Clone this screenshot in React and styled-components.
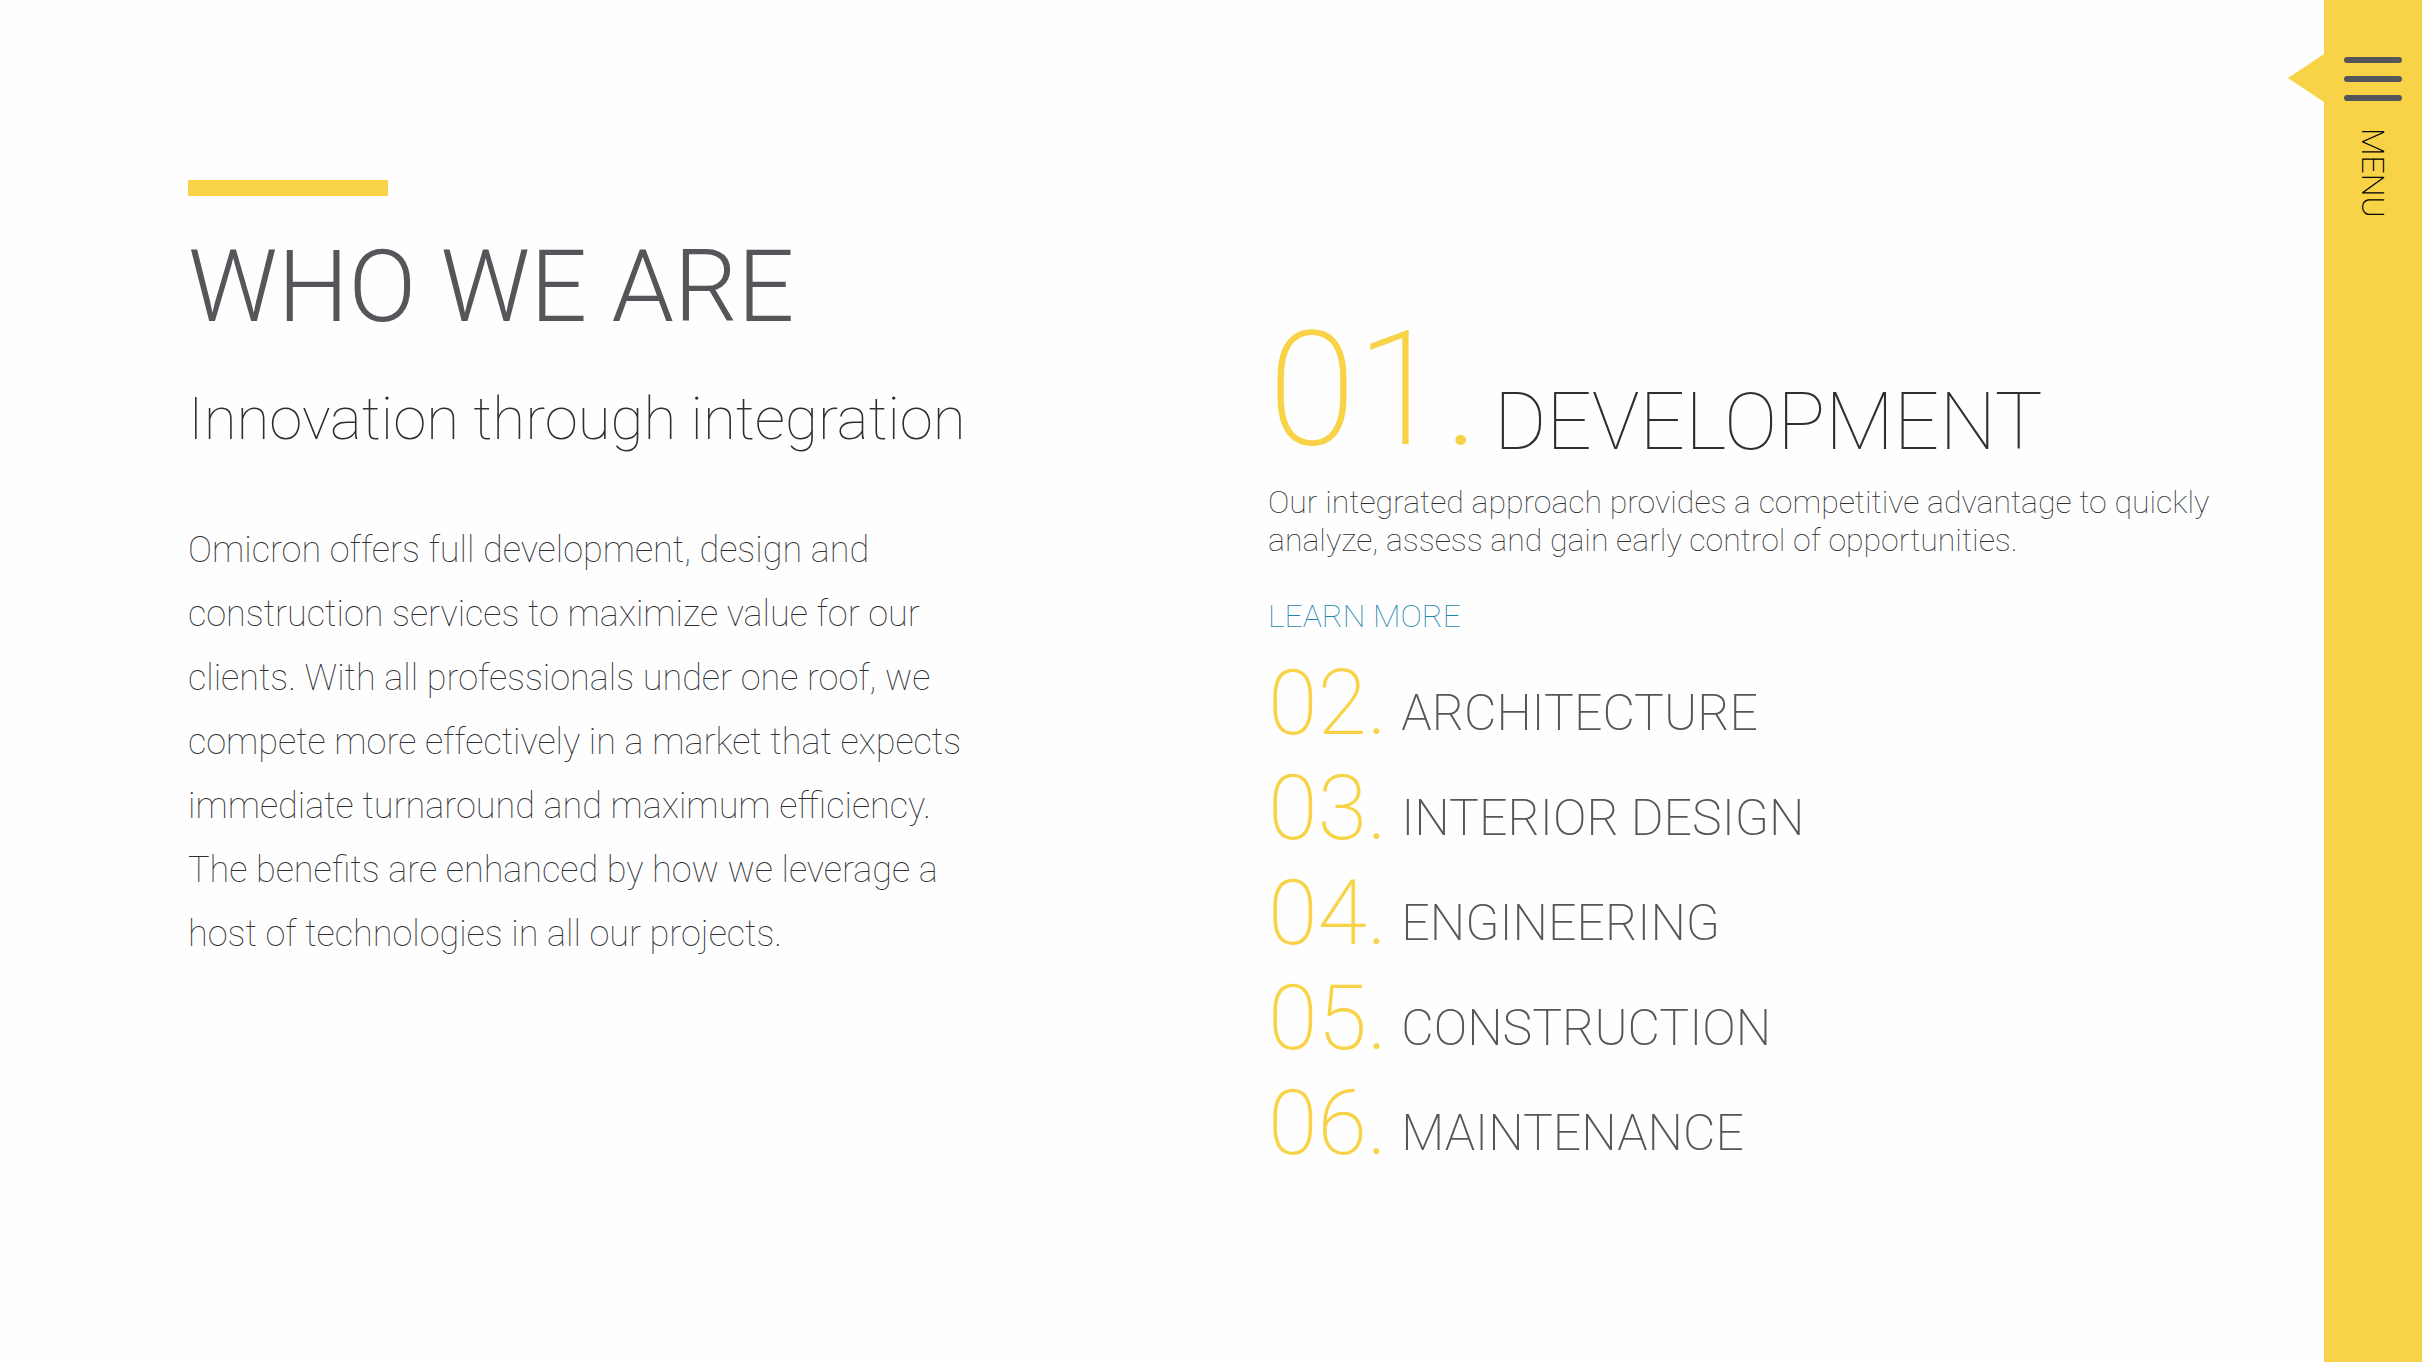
import React from "react";
import styled, { createGlobalStyle } from "styled-components";

const yellow = "#f8d347";
const ink = "#55565a";
const fineInk = "#2e2f33";

const GlobalStyle = createGlobalStyle`
  *, *::before, *::after { box-sizing: border-box; }
  body {
    margin: 0;
    background: #fefefe;
    color: ${ink};
    font-family: Roboto, "Open Sans", sans-serif;
    font-weight: 100;
  }
  h1, h2, h3, p, ol { margin: 0; padding: 0; font-weight: inherit; }
  button { border: 0; padding: 0; background: none; color: inherit; font: inherit; cursor: pointer; }
`;

const Page = styled.div`
  display: flex;
  min-height: 100vh;
`;

const Main = styled.main`
  flex: 1;
  display: grid;
  grid-template-columns: 8fr 7fr;
  align-items: start;
  padding: 180px 111px 96px 188px;
`;

const Intro = styled.section`
  display: flex;
  flex-direction: column;
`;

const Accent = styled.div`
  width: 200px;
  height: 16px;
  background: ${yellow};
`;

const Title = styled.h1`
  margin-top: 39px;
  font-size: 100px;
  line-height: 104px;
  font-weight: 300;
`;

const Subtitle = styled.h2`
  margin-top: 44px;
  color: ${fineInk};
  font-size: 60px;
  line-height: 72px;
`;

const Body = styled.p`
  max-width: 800px;
  margin-top: 63px;
  color: ${fineInk};
  font-size: 36px;
  line-height: 64px;
`;

const Services = styled.ol`
  display: flex;
  flex-direction: column;
  gap: 15px;
  padding-top: 130px;
  list-style: none;
`;

const Service = styled.li`
  padding-bottom: ${(p) => (p.$open ? "9px" : "0")};
`;

const ServiceHeader = styled.button`
  display: flex;
  align-items: flex-end;
  gap: 14px;
  text-align: left;
`;

const Number = styled.span`
  color: ${yellow};
  font-size: ${(p) => (p.$open ? "160px" : "90px")};
  line-height: ${(p) => (p.$open ? "160px" : "90px")};
  font-weight: 200;
`;

const Name = styled.span`
  color: ${(p) => (p.$open ? fineInk : ink)};
  font-size: ${(p) => (p.$open ? "80px" : "50px")};
  line-height: ${(p) => (p.$open ? "96px" : "72px")};
  font-weight: ${(p) => (p.$open ? 100 : 200)};
`;

const Details = styled.div`
  display: flex;
  flex-direction: column;
  align-items: flex-start;
  gap: 38px;
  padding-top: 13px;
  color: ${fineInk};
  font-size: 32px;
  line-height: 38px;
`;

const More = styled.a`
  color: #1c86ae;
  text-decoration: none;
`;

const Rail = styled.aside`
  position: relative;
  flex: none;
  width: 98px;
  background: ${yellow};

  &::before {
    content: "";
    position: absolute;
    top: 54px;
    right: 100%;
    border: solid transparent;
    border-width: 24px 36px 24px 0;
    border-right-color: ${yellow};
  }
`;

const MenuButton = styled.button`
  display: flex;
  flex-direction: column;
  align-items: center;
  gap: 27px;
  width: 100%;
  padding-top: 57px;
`;

const Bars = styled.span`
  display: flex;
  flex-direction: column;
  gap: 13px;
`;

const Bar = styled.span`
  width: 58px;
  height: 6px;
  border-radius: 3px;
  background: ${ink};
`;

const MenuLabel = styled.span`
  writing-mode: vertical-rl;
  color: #000;
  font-size: 32px;
  line-height: 38px;
  font-weight: 200;
`;

const services = [
  {
    name: "DEVELOPMENT",
    text: "Our integrated approach provides a competitive advantage to quickly analyze, assess and gain early control of opportunities.",
  },
  { name: "ARCHITECTURE" },
  { name: "INTERIOR DESIGN" },
  { name: "ENGINEERING" },
  { name: "CONSTRUCTION" },
  { name: "MAINTENANCE" },
];

export default function App() {
  return (
    <>
      <GlobalStyle />
      <Page>
        <Main>
          <Intro>
            <Accent />
            <Title>WHO WE ARE</Title>
            <Subtitle>Innovation through integration</Subtitle>
            <Body>
              Omicron offers full development, design and construction services to maximize value for our
              clients. With all professionals under one roof, we compete more effectively in a market that
              expects immediate turnaround and maximum efficiency. The benefits are enhanced by how we
              leverage a host of technologies in all our projects.
            </Body>
          </Intro>
          <Services>
            {services.map((service, index) => {
              const open = Boolean(service.text);
              return (
                <Service key={service.name} $open={open}>
                  <h3>
                    <ServiceHeader type="button" aria-expanded={open}>
                      <Number $open={open}>{`0${index + 1}.`}</Number>
                      <Name $open={open}>{service.name}</Name>
                    </ServiceHeader>
                  </h3>
                  {open && (
                    <Details>
                      <p>{service.text}</p>
                      <More href="#development">LEARN MORE</More>
                    </Details>
                  )}
                </Service>
              );
            })}
          </Services>
        </Main>
        <Rail>
          <MenuButton type="button">
            <Bars>
              <Bar />
              <Bar />
              <Bar />
            </Bars>
            <MenuLabel>MENU</MenuLabel>
          </MenuButton>
        </Rail>
      </Page>
    </>
  );
}
